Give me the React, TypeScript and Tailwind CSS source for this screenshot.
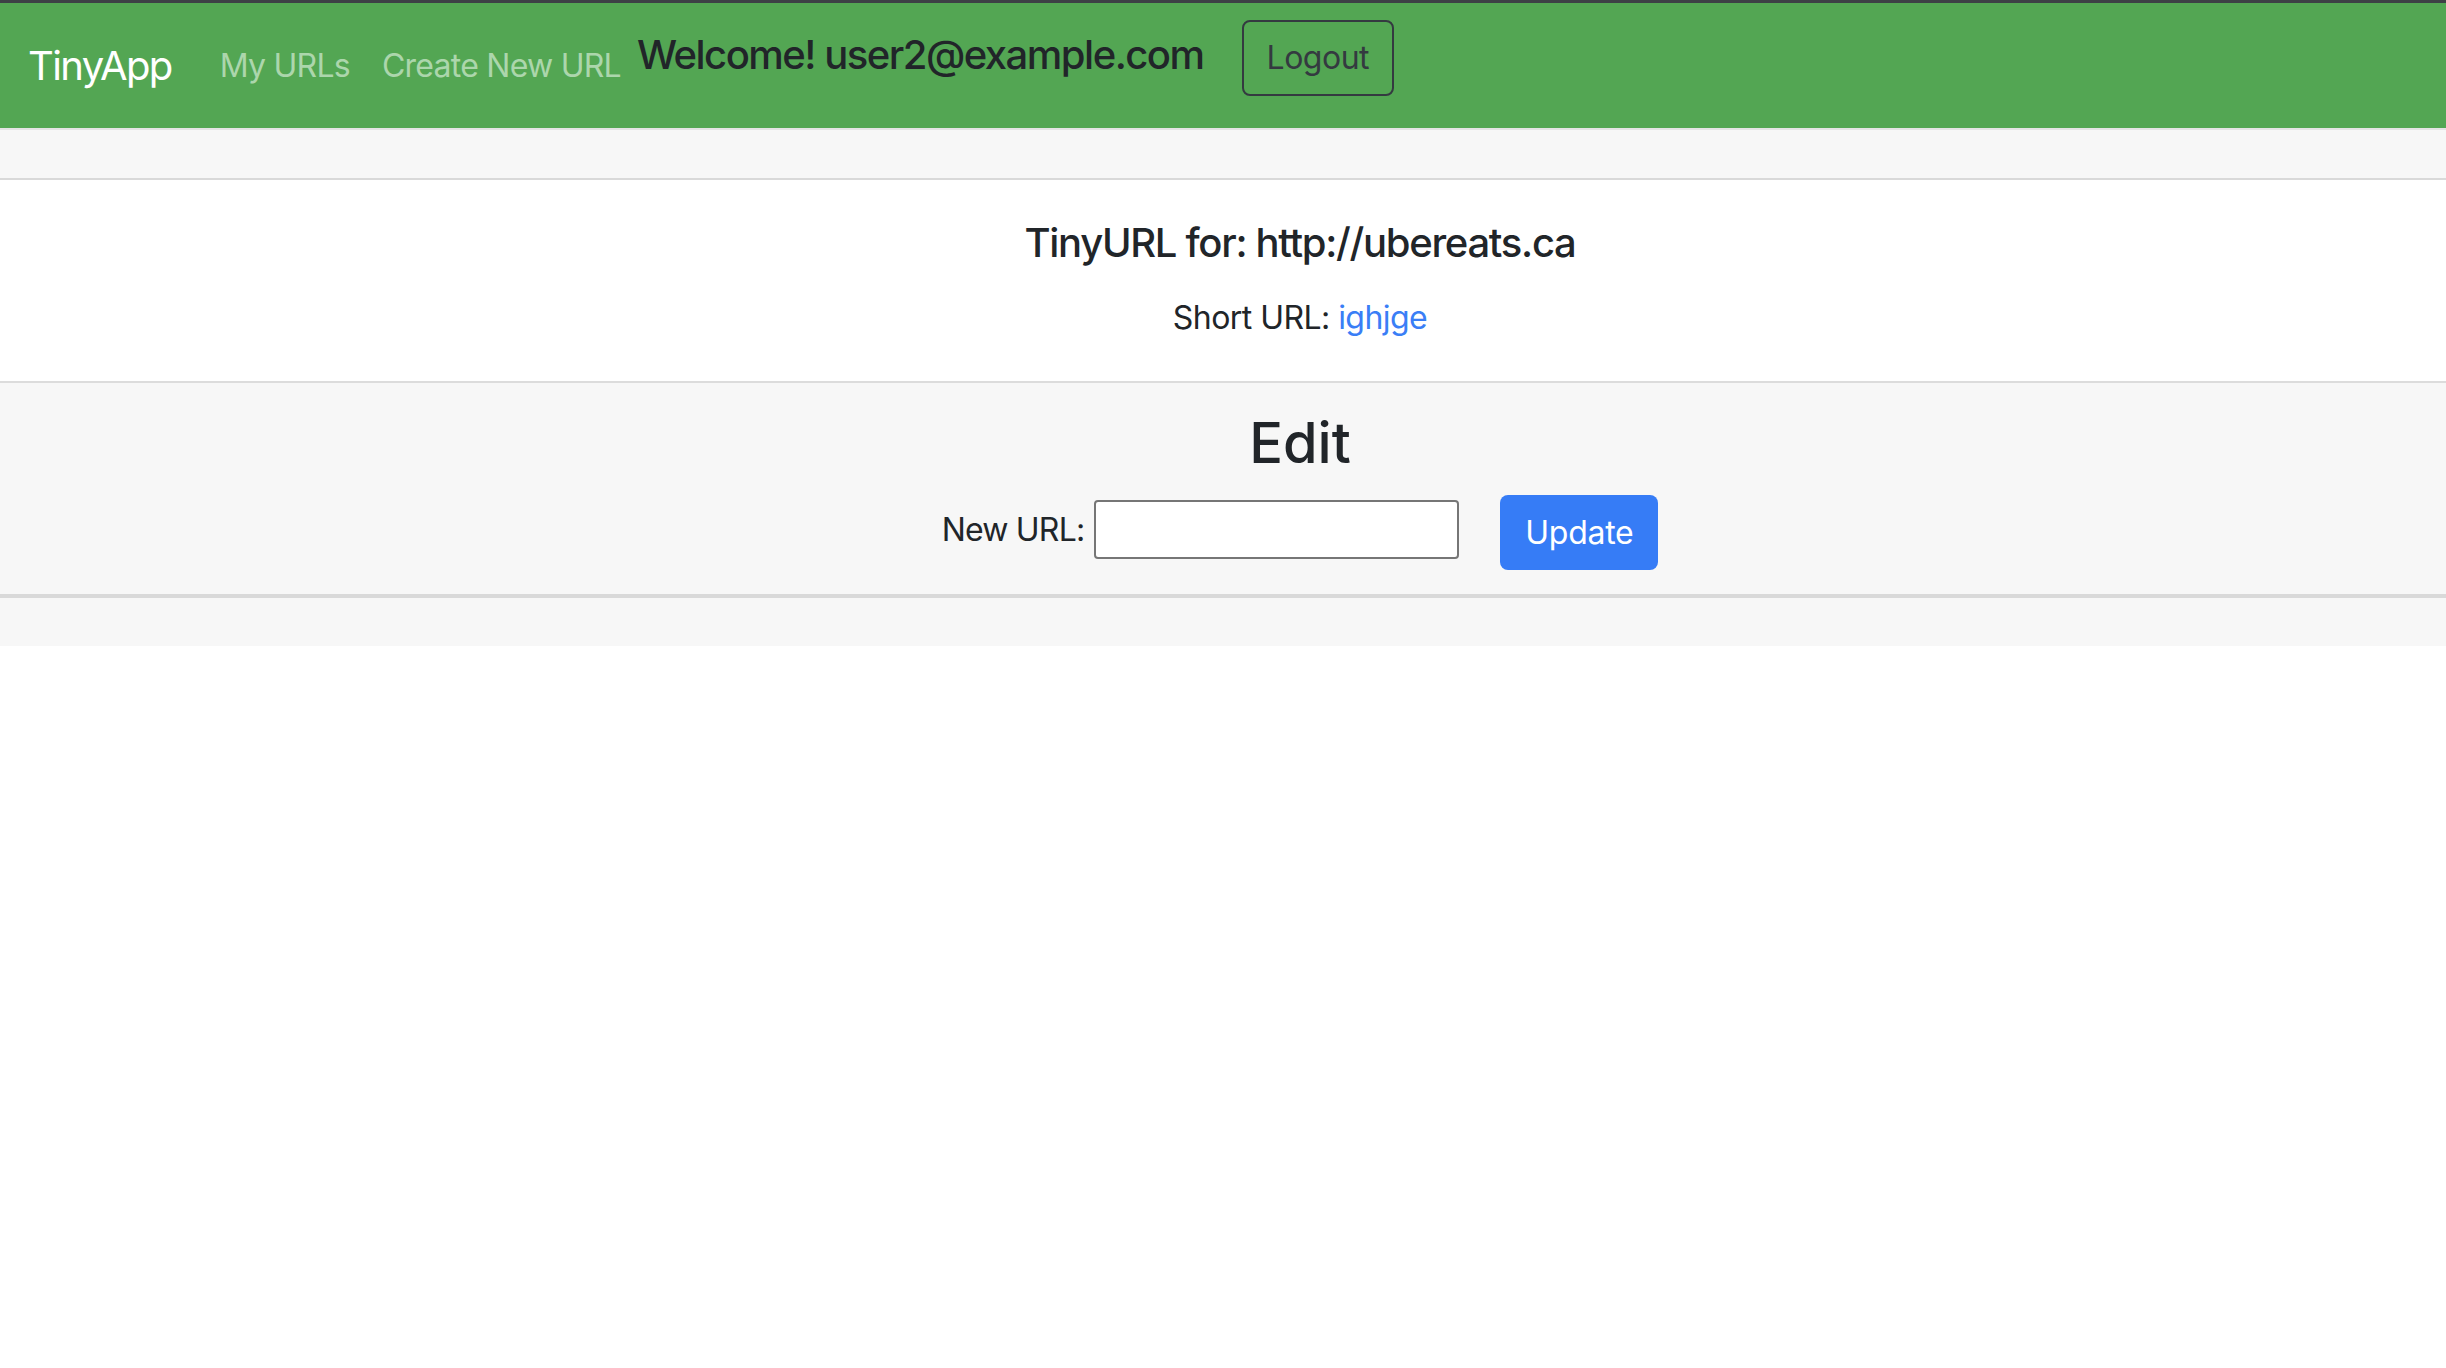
const NavLink = ({ label }: { label: string }) => {
  return (
    <a href="#" className="px-[16px] py-[16px] text-[32px] leading-[48px] tracking-[-0.75px] text-[#acd6ac] no-underline">
      {label}
    </a>
  );
};

export default function App() {
  return (
    <div className="min-h-screen bg-white text-[#212529] font-['Inter','Helvetica_Neue',Arial,sans-serif]">
      <div className="h-[3px] bg-[#3d4045]" />

      <nav className="h-[125px] bg-[#53a653] flex items-center pl-[28px]">
        <a href="#" className="mr-[32px] text-[40px] leading-[60px] tracking-[-1.6px] text-white">
          TinyApp
        </a>
        <NavLink label="My URLs" />
        <NavLink label="Create New URL" />
        <h5 className="mb-[21px] text-[40px] leading-[48px] font-medium tracking-[-1.5px]">
          Welcome! user2@example.com
        </h5>
        <form className="ml-[38px] mb-[15px]">
          <button
            type="button"
            className="h-[76px] px-[23px] border-2 border-[#343a40] rounded-[8px] text-[32px] leading-[48px] tracking-[-0.5px] text-[#343a40]"
          >
            Logout
          </button>
        </form>
      </nav>

      <div className="h-[52px] bg-[#f7f7f7] border-t-2 border-[#e4e4e4] border-b-2 border-b-[#d9d9d9]" />

      <main className="pl-[154px] text-center">
        <section className="pt-[39px] pb-[39px]">
          <h5 className="text-[40px] leading-[48px] font-medium tracking-[-1.3px]">
            TinyURL for: http://ubereats.ca
          </h5>
          <p className="mt-[27px] text-[32px] leading-[48px] tracking-[-0.55px]">
            Short URL:{" "}
            <a href="#" className="text-[#3a7ef6]">
              ighjge
            </a>
          </p>
        </section>
      </main>

      <section className="bg-[#f7f7f7] border-t-2 border-[#dcdcdc] border-b-4 border-b-[#d9d9d9]">
        <div className="pl-[154px] text-center pt-[27px] pb-[24px]">
          <h3 className="text-[56px] leading-[67px] font-medium">Edit</h3>
          <form className="mt-[18px] flex items-center justify-center">
            <label className="mb-[6px] text-[32px] leading-[48px] tracking-[-0.8px]">New URL:</label>
            <input
              type="text"
              className="mb-[6px] ml-[10px] w-[365px] h-[59px] bg-white border-2 border-[#767676] rounded-[4px]"
            />
            <button
              type="button"
              className="ml-[41px] h-[75px] px-[25px] bg-[#367cf6] text-white rounded-[8px] text-[32px] leading-[48px] tracking-[-0.3px]"
            >
              Update
            </button>
          </form>
        </div>
      </section>

      <div className="h-[48px] bg-[#f7f7f7]" />
    </div>
  );
}
